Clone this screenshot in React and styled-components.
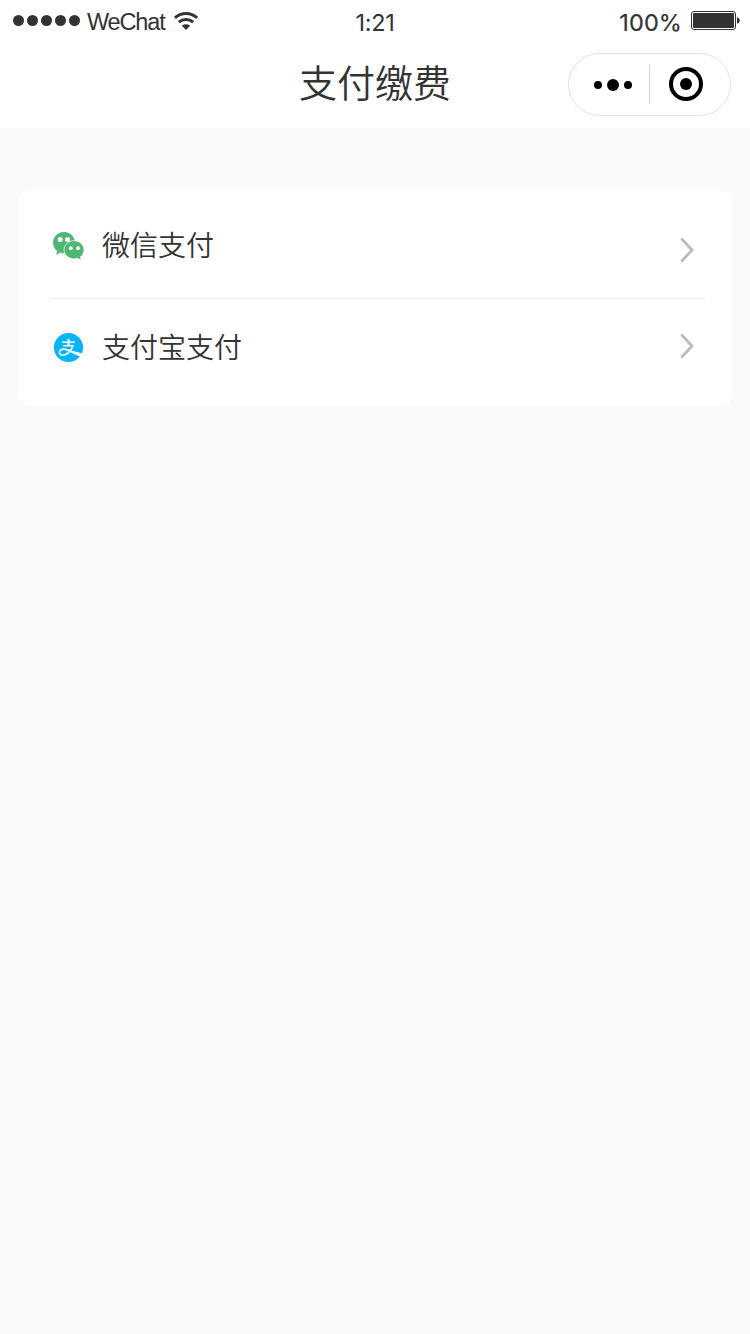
import React from 'react';
import styled, { createGlobalStyle } from 'styled-components';

const GlobalStyle = createGlobalStyle`
  * {
    box-sizing: border-box;
  }

  body {
    margin: 0;
    background-color: #f8fafc;
    color: #333333;
    font-family: "Liberation Sans", "Noto Sans CJK SC", sans-serif;
  }
`;

const Page = styled.div`
  min-height: 1334px;
  background-color: #f8fafc;
`;

const Header = styled.header`
  height: 128px;
  background-color: #ffffff;
`;

const StatusBar = styled.div`
  display: grid;
  grid-template-columns: 1fr auto 1fr;
  height: 44px;
  padding: 0 10px 0 13px;
`;

const Carrier = styled.div`
  display: flex;
  align-items: flex-start;
`;

const SignalDots = styled.div`
  display: flex;
  gap: 3px;
  padding-top: 15px;
`;

const SignalDot = styled.span`
  width: 11px;
  height: 11px;
  border-radius: 50%;
  background-color: #333333;
`;

const CarrierName = styled.span`
  width: 93px;
  padding: 9px 0 0 7px;
  font-size: 23.5px;
  line-height: 27px;
  letter-spacing: -1.15px;
  white-space: nowrap;
`;

const WifiIcon = styled.svg`
  width: 26px;
  height: 20px;
  margin-top: 11px;
`;

const Time = styled.span`
  margin-left: -3px;
  padding: 9px 0 0;
  font-family: Inter, sans-serif;
  font-size: 23.5px;
  font-weight: 400;
  line-height: 28px;
  letter-spacing: -0.3px;
`;

const Power = styled.div`
  display: flex;
  justify-content: flex-end;
  align-items: flex-start;
  gap: 9px;
`;

const PowerLevel = styled.span`
  padding-top: 9px;
  font-family: Inter, sans-serif;
  font-size: 23.5px;
  font-weight: 400;
  line-height: 28px;
  letter-spacing: 0.1px;
  -webkit-text-stroke: 0.2px #333333;
`;

const BatteryIcon = styled.svg`
  width: 49px;
  height: 20px;
  margin-top: 11px;
`;

const NavBar = styled.div`
  display: grid;
  grid-template-columns: 1fr auto 1fr;
  height: 84px;
  padding: 9px 19px 0;
`;

const Title = styled.h1`
  grid-column: 2;
  margin: 0;
  font-family: "Noto Sans CJK SC", sans-serif;
  font-size: 38px;
  font-weight: 350;
  line-height: 56px;
`;

const Capsule = styled.div`
  display: flex;
  justify-self: end;
  align-items: center;
  width: 163px;
  height: 63px;
  border: 1px solid #e2e2e2;
  border-radius: 32px;
`;

const CapsuleButton = styled.button`
  display: flex;
  justify-content: center;
  align-items: center;
  width: ${({ $width }) => $width}px;
  height: 61px;
  padding: ${({ $padding }) => $padding};
  border: none;
  background: none;
`;

const CapsuleDivider = styled.span`
  width: 1px;
  height: 39px;
  background-color: #d0d0d0;
`;

const Card = styled.main`
  width: 713px;
  height: 216px;
  margin: 62px 0 0 19px;
  padding: 0 26px 0 31px;
  border-radius: 12px;
  background-color: #ffffff;
`;

const Row = styled.div`
  display: flex;
  height: ${({ $height }) => $height}px;
  padding-left: 1px;
  border-bottom: ${({ $divided }) => ($divided ? '1px solid #eeeeee' : 'none')};
`;

const RowIcon = styled.svg`
  flex: none;
  width: 36px;
  height: 36px;
  margin-top: ${({ $top }) => $top}px;
`;

const RowLabel = styled.span`
  flex: 1;
  padding: ${({ $top }) => $top}px 0 0 15px;
  font-family: "Noto Sans CJK SC", sans-serif;
  font-size: 28px;
  font-weight: 350;
  line-height: 40px;
`;

const Chevron = styled.svg`
  flex: none;
  width: 16px;
  height: 28px;
  margin: ${({ $top }) => $top}px 11px 0 0;
`;

const WechatLogo = ({ top }) => (
  <RowIcon viewBox="0 0 36 36" $top={top}>
    <path
      d="M13 4C6.900 4 2 8.700 2 14.700c0 3.300 1.500 6.100 3.900 8l-.5 4.300 4-2.400c1.200.4 2.300.6 3.600.6 6.100 0 11-4.700 11-10.500S19.100 4 13 4z"
      fill="#50b674"
    />
    <path
      d="M23.100 12.700c5.500 0 9.900 4.100 9.900 9.100 0 2.800-1.400 5.300-3.500 7l.6 3.400-3.400-1.900c-1.200.4-2.300.6-3.600.6-5.600 0-10.100-4.100-10.100-9.100s4.500-9.100 10.100-9.100z"
      fill="#50b674"
      stroke="#ffffff"
      strokeWidth="0.700"
    />
    <circle cx="9.200" cy="11.500" r="2.500" fill="#ffffff" />
    <circle cx="16.500" cy="11.500" r="2.500" fill="#ffffff" />
    <circle cx="19.800" cy="20.200" r="1.900" fill="#ffffff" />
    <circle cx="27" cy="20.200" r="1.900" fill="#ffffff" />
  </RowIcon>
);

const AlipayLogo = ({ top }) => (
  <RowIcon viewBox="0 0 36 36" $top={top}>
    <circle cx="17.500" cy="18.500" r="14.600" fill="#06b4fd" />
    <g fill="none" stroke="#ffffff">
      <path d="M11 13.200h13" strokeWidth="1.500" />
      <path d="M17.500 10v6.300" strokeWidth="2.200" />
      <path d="M12.300 16.700h10.200" strokeWidth="1.500" />
      <path d="M22 16.200c-1.200 3.800-3.300 6.800-6 8.500-2.600 1.600-5.600 1.700-6.900.4-1.400-1.500-.5-3.700 1.300-4.500 2.700-1.200 5.500-.2 8.700 1.300" strokeWidth="1.600" />
    </g>
    <path d="M17.200 20.300c4.300 1.700 8.800 2.800 14.600 4.200l-1.500 3.800c-4.500-1.900-9-4-13.300-6.300z" fill="#ffffff" />
  </RowIcon>
);

const methods = [
  { label: '微信支付', Logo: WechatLogo, height: 109, logoTop: 38, labelTop: 34, arrowTop: 46, divided: true },
  { label: '支付宝支付', Logo: AlipayLogo, height: 107, logoTop: 30, labelTop: 27, arrowTop: 33, divided: false },
];

const App = () => (
  <Page>
    <GlobalStyle />
    <Header>
      <StatusBar>
        <Carrier>
          <SignalDots>
            {[0, 1, 2, 3, 4].map((dot) => (
              <SignalDot key={dot} />
            ))}
          </SignalDots>
          <CarrierName>WeChat</CarrierName>
          <WifiIcon viewBox="0 0 26 20">
            <g fill="none" stroke="#333333" strokeWidth="3">
              <path d="M1.900 6.800C8.300.9 17.700.9 24.100 6.800" />
              <path d="M5.800 11.200c4.200-3.700 10.200-3.700 14.400 0" />
            </g>
            <path d="M8.800 14.700c2.600-1.900 5.800-1.900 8.400 0L13 18.900z" fill="#333333" />
          </WifiIcon>
        </Carrier>
        <Time>1:21</Time>
        <Power>
          <PowerLevel>100%</PowerLevel>
          <BatteryIcon viewBox="0 0 49 20">
            <rect x="0.500" y="0.500" width="44" height="18" rx="2.500" fill="none" stroke="#333333" />
            <rect x="2" y="2" width="41" height="15" rx="1" fill="#333333" />
            <path d="M46 6.300c1.800.5 2.800 1.700 2.800 3.200S47.800 12.200 46 12.700z" fill="#333333" />
          </BatteryIcon>
        </Power>
      </StatusBar>
      <NavBar>
        <Title>支付缴费</Title>
        <Capsule>
          <CapsuleButton $width={80} $padding="0 0 0 8px">
            <svg width="38" height="12" viewBox="0 0 38 12">
              <circle cx="4" cy="6" r="4" />
              <circle cx="19" cy="6" r="6" />
              <circle cx="34" cy="6" r="4" />
            </svg>
          </CapsuleButton>
          <CapsuleDivider />
          <CapsuleButton $width={80} $padding="0 8px 2px 0">
            <svg width="34" height="34" viewBox="0 0 34 34">
              <circle cx="17" cy="17" r="15" fill="none" stroke="#000000" strokeWidth="4" />
              <circle cx="17" cy="17" r="6" />
            </svg>
          </CapsuleButton>
        </Capsule>
      </NavBar>
    </Header>
    <Card>
      {methods.map(({ label, Logo, height, logoTop, labelTop, arrowTop, divided }) => (
        <Row key={label} $height={height} $divided={divided}>
          <Logo top={logoTop} />
          <RowLabel $top={labelTop}>{label}</RowLabel>
          <Chevron viewBox="0 0 16 28" $top={arrowTop}>
            <path
              d="M3 3.300L13 14 3 24.700"
              fill="none"
              stroke="#bbbbbb"
              strokeWidth="2.800"
              strokeLinecap="round"
              strokeLinejoin="round"
            />
          </Chevron>
        </Row>
      ))}
    </Card>
  </Page>
);

export default App;
